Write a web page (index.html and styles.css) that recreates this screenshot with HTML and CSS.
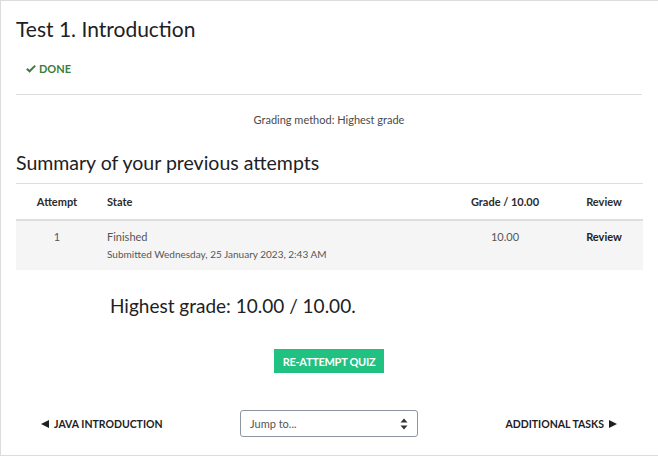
FILE: index.html
```html
<!DOCTYPE html>
<html lang="en">
<head>
<meta charset="utf-8">
<title>Test 1. Introduction</title>
<link rel="stylesheet" href="styles.css">
</head>
<body>
<div class="card">
  <h2 class="title">Test 1. Introduction</h2>
  <div class="completion">
    <span class="badge-done">
      <svg class="check" viewBox="0 0 12 10" width="10" height="9"><path d="M1 5.2 L4.3 8.3 L11 1.6" fill="none" stroke="#3b7d3b" stroke-width="2.4"/></svg>
      DONE
    </span>
  </div>
  <hr class="rule">
  <p class="method">Grading method: Highest grade</p>
  <h3 class="summary">Summary of your previous attempts</h3>
  <table class="attempts">
    <colgroup>
      <col class="c-attempt"><col class="c-state"><col class="c-grade"><col class="c-review">
    </colgroup>
    <thead>
      <tr>
        <th class="center">Attempt</th>
        <th class="left">State</th>
        <th class="center">Grade / 10.00</th>
        <th class="center">Review</th>
      </tr>
    </thead>
    <tbody>
      <tr>
        <td class="center num">1</td>
        <td class="left state">Finished<span class="submitted">Submitted Wednesday, 25 January 2023, 2:43 AM</span></td>
        <td class="center grade">10.00</td>
        <td class="center review">Review</td>
      </tr>
    </tbody>
  </table>
  <h3 class="highest">Highest grade: 10.00 / 10.00.</h3>
  <div class="actions">
    <button class="btn-reattempt">RE-ATTEMPT QUIZ</button>
  </div>
  <div class="nav">
    <a class="nav-prev"><svg class="tri" viewBox="0 0 8 8" width="8" height="8"><path d="M0 4 L8 0 V8 Z" fill="#1d2125"/></svg>JAVA INTRODUCTION</a>
    <div class="jump">
      <span>Jump to...</span>
      <svg class="caret" viewBox="0 0 8 12" width="8" height="12"><path d="M4 0.5 L7.5 4.5 H0.5 Z M4 11.5 L7.5 7.5 H0.5 Z" fill="#333"/></svg>
    </div>
    <a class="nav-next">ADDITIONAL TASKS<svg class="tri" viewBox="0 0 8 8" width="8" height="8"><path d="M8 4 L0 0 V8 Z" fill="#1d2125"/></svg></a>
  </div>
</div>
</body>
</html>
```
FILE: styles.css
```css
html, body {
  margin: 0;
  padding: 0;
  background: #fff;
}
body {
  font-family: "Lato", "Liberation Sans", sans-serif;
  color: #1d2125;
}
.card {
  box-sizing: border-box;
  width: 100%;
  height: 456px;
  border: 1px solid #dcdcdc;
  border-right: 0;
  padding: 0 16px 0 15px;
}
.title {
  margin: 0;
  padding-top: 15px;
  font-size: 21px;
  font-weight: 400;
  line-height: 26px;
  color: #1d2125;
}
.completion {
  padding-top: 15px;
  height: 14px;
}
.badge-done {
  display: inline-flex;
  align-items: center;
  gap: 3px;
  margin-left: 10px;
  font-size: 11px;
  font-weight: 700;
  color: #3b7d3b;
  line-height: 14px;
}
.rule {
  margin: 23px 0 0;
  border: 0;
  border-top: 1px solid #dedede;
}
.method {
  margin: 18px 0 0;
  text-align: center;
  font-size: 11px;
  line-height: 14px;
  color: #4a4a4a;
}
.summary {
  margin: 24px 0 0;
  font-size: 19.5px;
  font-weight: 400;
  line-height: 24px;
  color: #1d2125;
}
.attempts {
  margin-top: 8px;
  width: 627px;
  border-collapse: collapse;
  table-layout: fixed;
  font-size: 11px;
}
.c-attempt { width: 82px; }
.c-grade { width: 120px; }
.c-review { width: 78px; }
.attempts thead tr {
  border-top: 1px solid #dedede;
  border-bottom: 2px solid #dedede;
}
.attempts th {
  height: 35px;
  padding: 0;
  font-weight: 700;
  color: #2b2b2b;
  vertical-align: middle;
}
.attempts tbody tr {
  background: #f5f5f5;
}
.attempts td {
  height: 40px;
  padding: 9px 0 0;
  vertical-align: top;
  color: #555;
  line-height: 14px;
}
.center { text-align: center; }
.left { text-align: left; padding-left: 9px !important; }
.submitted {
  display: block;
  margin-top: 3px;
  font-size: 10px;
  color: #555;
}
.attempts td.review {
  font-weight: 700;
  color: #222;
}
.highest {
  margin: 24px 0 0;
  padding-left: 94px;
  font-size: 19px;
  font-weight: 400;
  line-height: 24px;
  color: #1d2125;
}
.actions {
  display: flex;
  justify-content: center;
  padding-top: 31px;
}
.btn-reattempt {
  width: 110px;
  height: 24px;
  border: 0;
  border-radius: 0;
  background: #20c181;
  color: #fff;
  font-family: inherit;
  font-size: 11px;
  font-weight: 700;
  letter-spacing: -0.3px;
  padding: 0;
}
.nav {
  display: grid;
  grid-template-columns: 1fr 178px 1fr;
  align-items: center;
  margin-top: 37px;
  font-size: 10.5px;
  font-weight: 700;
  color: #1d2125;
}
.nav-prev {
  display: inline-flex;
  align-items: center;
  gap: 5px;
  padding-left: 25px;
}
.nav-next {
  display: inline-flex;
  align-items: center;
  gap: 5px;
  justify-self: end;
  padding-right: 25px;
}
.jump {
  box-sizing: border-box;
  height: 27px;
  border: 1px solid #8f959e;
  border-radius: 3px;
  display: flex;
  align-items: center;
  justify-content: space-between;
  padding: 0 9px 0 9px;
  font-weight: 400;
  font-size: 11px;
  color: #555;
}
```
